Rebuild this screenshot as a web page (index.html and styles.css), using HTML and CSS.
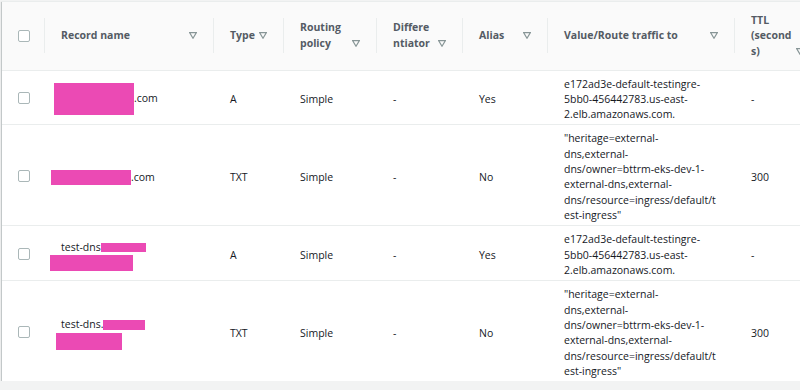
FILE: index.html
```html
<!DOCTYPE html>
<html lang="en">
<head>
    <meta charset="UTF-8">
    <meta name="viewport" content="width=device-width, initial-scale=1.0">
    <title>Records</title>
    <link rel="stylesheet" href="styles.css">
</head>
<body>
    <div class="panel">
        <table class="records">
            <colgroup>
                <col class="col-check">
                <col class="col-name">
                <col class="col-type">
                <col class="col-routing">
                <col class="col-diff">
                <col class="col-alias">
                <col class="col-value">
                <col class="col-ttl">
            </colgroup>
            <thead>
                <tr>
                    <th class="check"><span class="checkbox"></span></th>
                    <th><div class="th-inner"><span class="th-label">Record name</span><span class="sort"><svg width="8" height="7" viewBox="0 0 8 7"><polygon points="0.7,0.7 7.3,0.7 4,6.2" /></svg></span></div></th>
                    <th><div class="th-inner"><span class="th-label">Type</span><span class="sort"><svg width="8" height="7" viewBox="0 0 8 7"><polygon points="0.7,0.7 7.3,0.7 4,6.2" /></svg></span></div></th>
                    <th><div class="th-inner"><span class="th-label">Routing policy</span><span class="sort"><svg width="8" height="7" viewBox="0 0 8 7"><polygon points="0.7,0.7 7.3,0.7 4,6.2" /></svg></span></div></th>
                    <th><div class="th-inner"><span class="th-label">Differentiator</span><span class="sort"><svg width="8" height="7" viewBox="0 0 8 7"><polygon points="0.7,0.7 7.3,0.7 4,6.2" /></svg></span></div></th>
                    <th><div class="th-inner"><span class="th-label">Alias</span><span class="sort"><svg width="8" height="7" viewBox="0 0 8 7"><polygon points="0.7,0.7 7.3,0.7 4,6.2" /></svg></span></div></th>
                    <th><div class="th-inner"><span class="th-label">Value/Route traffic to</span><span class="sort"><svg width="8" height="7" viewBox="0 0 8 7"><polygon points="0.7,0.7 7.3,0.7 4,6.2" /></svg></span></div></th>
                    <th><div class="th-inner"><span class="th-label">TTL (seconds)</span><span class="sort"><svg width="8" height="7" viewBox="0 0 8 7"><polygon points="0.7,0.7 7.3,0.7 4,6.2" /></svg></span></div></th>
                </tr>
            </thead>
            <tbody>
                <tr>
                    <td class="check"><span class="checkbox"></span></td>
                    <td><span class="redact r1"></span>.com</td>
                    <td>A</td>
                    <td>Simple</td>
                    <td>-</td>
                    <td>Yes</td>
                    <td>e172ad3e-default-testingre-5bb0-456442783.us-east-2.elb.amazonaws.com.</td>
                    <td>-</td>
                </tr>
                <tr>
                    <td class="check"><span class="checkbox"></span></td>
                    <td><span class="redact r2"></span>.com</td>
                    <td>TXT</td>
                    <td>Simple</td>
                    <td>-</td>
                    <td>No</td>
                    <td>"heritage=external-dns,external-dns/owner=bttrm-eks-dev-1-external-dns,external-dns/resource=ingress/default/test-ingress"</td>
                    <td>300</td>
                </tr>
                <tr>
                    <td class="check"><span class="checkbox"></span></td>
                    <td>test-dns<span class="redact r3a"></span><span class="redact r3b"></span></td>
                    <td>A</td>
                    <td>Simple</td>
                    <td>-</td>
                    <td>Yes</td>
                    <td>e172ad3e-default-testingre-5bb0-456442783.us-east-2.elb.amazonaws.com.</td>
                    <td>-</td>
                </tr>
                <tr>
                    <td class="check"><span class="checkbox"></span></td>
                    <td>test-dns.<span class="redact r4a"></span><span class="redact r4b"></span></td>
                    <td>TXT</td>
                    <td>Simple</td>
                    <td>-</td>
                    <td>No</td>
                    <td>"heritage=external-dns,external-dns/owner=bttrm-eks-dev-1-external-dns,external-dns/resource=ingress/default/test-ingress"</td>
                    <td>300</td>
                </tr>
            </tbody>
        </table>
    </div>
</body>
</html>
```

FILE: styles.css
```css
* { box-sizing: border-box; }
html, body { margin: 0; }
body { background: #f2f3f3; padding: 1px 0 0 2px; overflow: hidden; font-family: "Open Sans", "Noto Sans", Arial, sans-serif; font-size: 10.5px; color: #16191f; }

.panel { width: 830px; background: #fff; border-top: 1px solid #eaeded; box-shadow: 0 1px 1px 0 rgba(0, 28, 36, 0.3), 1px 1px 1px 0 rgba(0, 28, 36, 0.15), -1px 1px 1px 0 rgba(0, 28, 36, 0.15); }

.records { table-layout: fixed; border-collapse: collapse; width: 818px; }
.col-check { width: 42px; }
.col-name { width: 169px; }
.col-type { width: 70px; }
.col-routing { width: 93px; }
.col-diff { width: 86px; }
.col-alias { width: 85px; }
.col-value { width: 187px; }
.col-ttl { width: 86px; }

th { position: relative; height: 68px; padding: 0 16px 0 17px; background: #fafafa; border-bottom: 1px solid #eaeded; text-align: left; vertical-align: middle; font-weight: 700; color: #545b64; line-height: 15.5px; }
th + th::before { content: ""; position: absolute; left: 0; top: 16px; height: 35px; width: 1px; background: #eaeded; }
.th-inner { display: flex; align-items: flex-end; gap: 4px; }
.th-label { flex: 1; min-width: 0; overflow-wrap: anywhere; }
.sort { flex: none; height: 15.5px; display: flex; align-items: center; }
.sort polygon { fill: none; stroke: #879596; stroke-width: 1.2; }

td { padding: 6px 16px 2px 17px; line-height: 15.33px; vertical-align: middle; border-bottom: 1px solid #eaeded; overflow-wrap: anywhere; }
tbody tr:last-child td { border-bottom: 0; }
.check { padding: 0 0 0 16px; }
.checkbox { display: inline-block; width: 12px; height: 12px; border: 1px solid #aab7b8; border-radius: 2px; background: #fff; vertical-align: middle; }

.redact { display: inline-block; background: #eb4ab4; vertical-align: middle; }
.r1 { width: 80px; height: 32px; margin-left: -7px; }
.r2 { width: 80px; height: 15px; margin-left: -10px; }
.r3a { width: 45px; height: 9px; }
.r3b { display: block; width: 83px; height: 16px; margin-left: -11px; }
.r4a { width: 42px; height: 10px; }
.r4b { display: block; width: 66px; height: 17px; margin-left: -5px; margin-top: 1px; }
```
